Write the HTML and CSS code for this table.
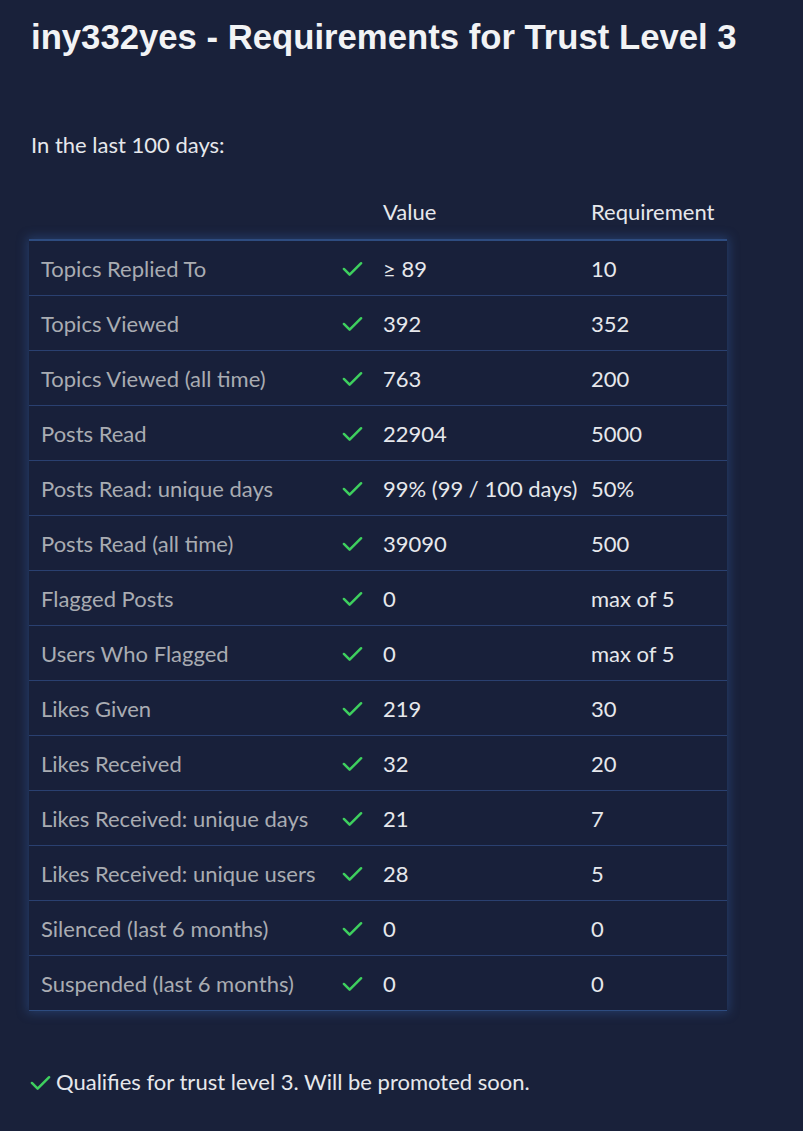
FILE: index.html
```html
<!DOCTYPE html>
<html>
<head>
<meta charset="utf-8">
<link rel="stylesheet" href="styles.css">
</head>
<body>
<div class="page">
  <h1 class="title">iny332yes - Requirements for Trust Level 3</h1>
  <p class="intro">In the last 100 days:</p>
  <div class="head">
    <span class="c-label"></span>
    <span class="c-check"></span>
    <span class="c-value">Value</span>
    <span class="c-req">Requirement</span>
  </div>
  <div class="table">
    <div class="row"><span class="c-label">Topics Replied To</span><span class="c-check"><svg viewBox="0 0 24 24"><path d="M3 12.5l6 6L21 6.5"/></svg></span><span class="c-value">≥ 89</span><span class="c-req">10</span></div>
    <div class="row"><span class="c-label">Topics Viewed</span><span class="c-check"><svg viewBox="0 0 24 24"><path d="M3 12.5l6 6L21 6.5"/></svg></span><span class="c-value">392</span><span class="c-req">352</span></div>
    <div class="row"><span class="c-label">Topics Viewed (all time)</span><span class="c-check"><svg viewBox="0 0 24 24"><path d="M3 12.5l6 6L21 6.5"/></svg></span><span class="c-value">763</span><span class="c-req">200</span></div>
    <div class="row"><span class="c-label">Posts Read</span><span class="c-check"><svg viewBox="0 0 24 24"><path d="M3 12.5l6 6L21 6.5"/></svg></span><span class="c-value">22904</span><span class="c-req">5000</span></div>
    <div class="row"><span class="c-label">Posts Read: unique days</span><span class="c-check"><svg viewBox="0 0 24 24"><path d="M3 12.5l6 6L21 6.5"/></svg></span><span class="c-value">99% (99 / 100 days)</span><span class="c-req">50%</span></div>
    <div class="row"><span class="c-label">Posts Read (all time)</span><span class="c-check"><svg viewBox="0 0 24 24"><path d="M3 12.5l6 6L21 6.5"/></svg></span><span class="c-value">39090</span><span class="c-req">500</span></div>
    <div class="row"><span class="c-label">Flagged Posts</span><span class="c-check"><svg viewBox="0 0 24 24"><path d="M3 12.5l6 6L21 6.5"/></svg></span><span class="c-value">0</span><span class="c-req">max of 5</span></div>
    <div class="row"><span class="c-label">Users Who Flagged</span><span class="c-check"><svg viewBox="0 0 24 24"><path d="M3 12.5l6 6L21 6.5"/></svg></span><span class="c-value">0</span><span class="c-req">max of 5</span></div>
    <div class="row"><span class="c-label">Likes Given</span><span class="c-check"><svg viewBox="0 0 24 24"><path d="M3 12.5l6 6L21 6.5"/></svg></span><span class="c-value">219</span><span class="c-req">30</span></div>
    <div class="row"><span class="c-label">Likes Received</span><span class="c-check"><svg viewBox="0 0 24 24"><path d="M3 12.5l6 6L21 6.5"/></svg></span><span class="c-value">32</span><span class="c-req">20</span></div>
    <div class="row"><span class="c-label">Likes Received: unique days</span><span class="c-check"><svg viewBox="0 0 24 24"><path d="M3 12.5l6 6L21 6.5"/></svg></span><span class="c-value">21</span><span class="c-req">7</span></div>
    <div class="row"><span class="c-label">Likes Received: unique users</span><span class="c-check"><svg viewBox="0 0 24 24"><path d="M3 12.5l6 6L21 6.5"/></svg></span><span class="c-value">28</span><span class="c-req">5</span></div>
    <div class="row"><span class="c-label">Silenced (last 6 months)</span><span class="c-check"><svg viewBox="0 0 24 24"><path d="M3 12.5l6 6L21 6.5"/></svg></span><span class="c-value">0</span><span class="c-req">0</span></div>
    <div class="row"><span class="c-label">Suspended (last 6 months)</span><span class="c-check"><svg viewBox="0 0 24 24"><path d="M3 12.5l6 6L21 6.5"/></svg></span><span class="c-value">0</span><span class="c-req">0</span></div>
  </div>
  <p class="result"><svg class="rcheck" viewBox="0 0 24 24"><path d="M3 12.5l6 6L21 6.5"/></svg>Qualifies for trust level 3. Will be promoted soon.</p>
</div>
</body>
</html>
```
FILE: styles.css
```css
html, body {
  margin: 0;
  padding: 0;
  background: #19213a;
}
body {
  font-family: "Lato", "Noto Sans", sans-serif;
  color: #e4e6ea;
  height: 1131px;
  overflow: hidden;
}
.page {
  padding: 18px 0 0 29px;
  width: 698px;
}
.title {
  font-family: "Liberation Sans", Arial, sans-serif;
  font-weight: bold;
  font-size: 34.7px;
  line-height: 38px;
  margin: 0 0 0 2px;
  color: #f2f3f5;
  white-space: nowrap;
}
.intro {
  margin: 76px 0 0 2px;
  font-size: 22px;
  line-height: 26px;
  color: #e6e8ec;
}
.head, .row {
  display: grid;
  grid-template-columns: 301px 42px 208px 1fr;
  align-items: center;
}
.head {
  margin-top: 36px;
  margin-bottom: 11px;
  height: 34px;
  color: #a8abb2;
  font-size: 22px;
}
.table {
  border-top: 2px solid #2e4c80;
  box-shadow: 0 0 10px 2px rgba(60, 110, 190, 0.35);
  background: #18203a;
}
.row {
  height: 54px;
  border-bottom: 1px solid #2a4070;
  font-size: 22px;
}
.row:last-child { border-bottom: 1px solid #2e4c80; }
.c-label {
  padding-left: 12px;
  color: #a9acb2;
  white-space: nowrap;
}
.c-check {
  display: flex;
  justify-content: center;
  padding-left: 2px;
}
.c-check svg, .rcheck {
  width: 23px;
  height: 23px;
  fill: none;
  stroke: #3ecf5e;
  stroke-width: 2.6;
  stroke-linecap: round;
  stroke-linejoin: round;
}
.c-value, .c-req {
  padding-left: 11px;
  color: #e6e8ec;
  white-space: nowrap;
}
.result {
  margin: 58px 0 0 0;
  font-size: 22px;
  line-height: 26px;
  display: flex;
  align-items: center;
  gap: 4px;
  color: #e6e8ec;
}
```
